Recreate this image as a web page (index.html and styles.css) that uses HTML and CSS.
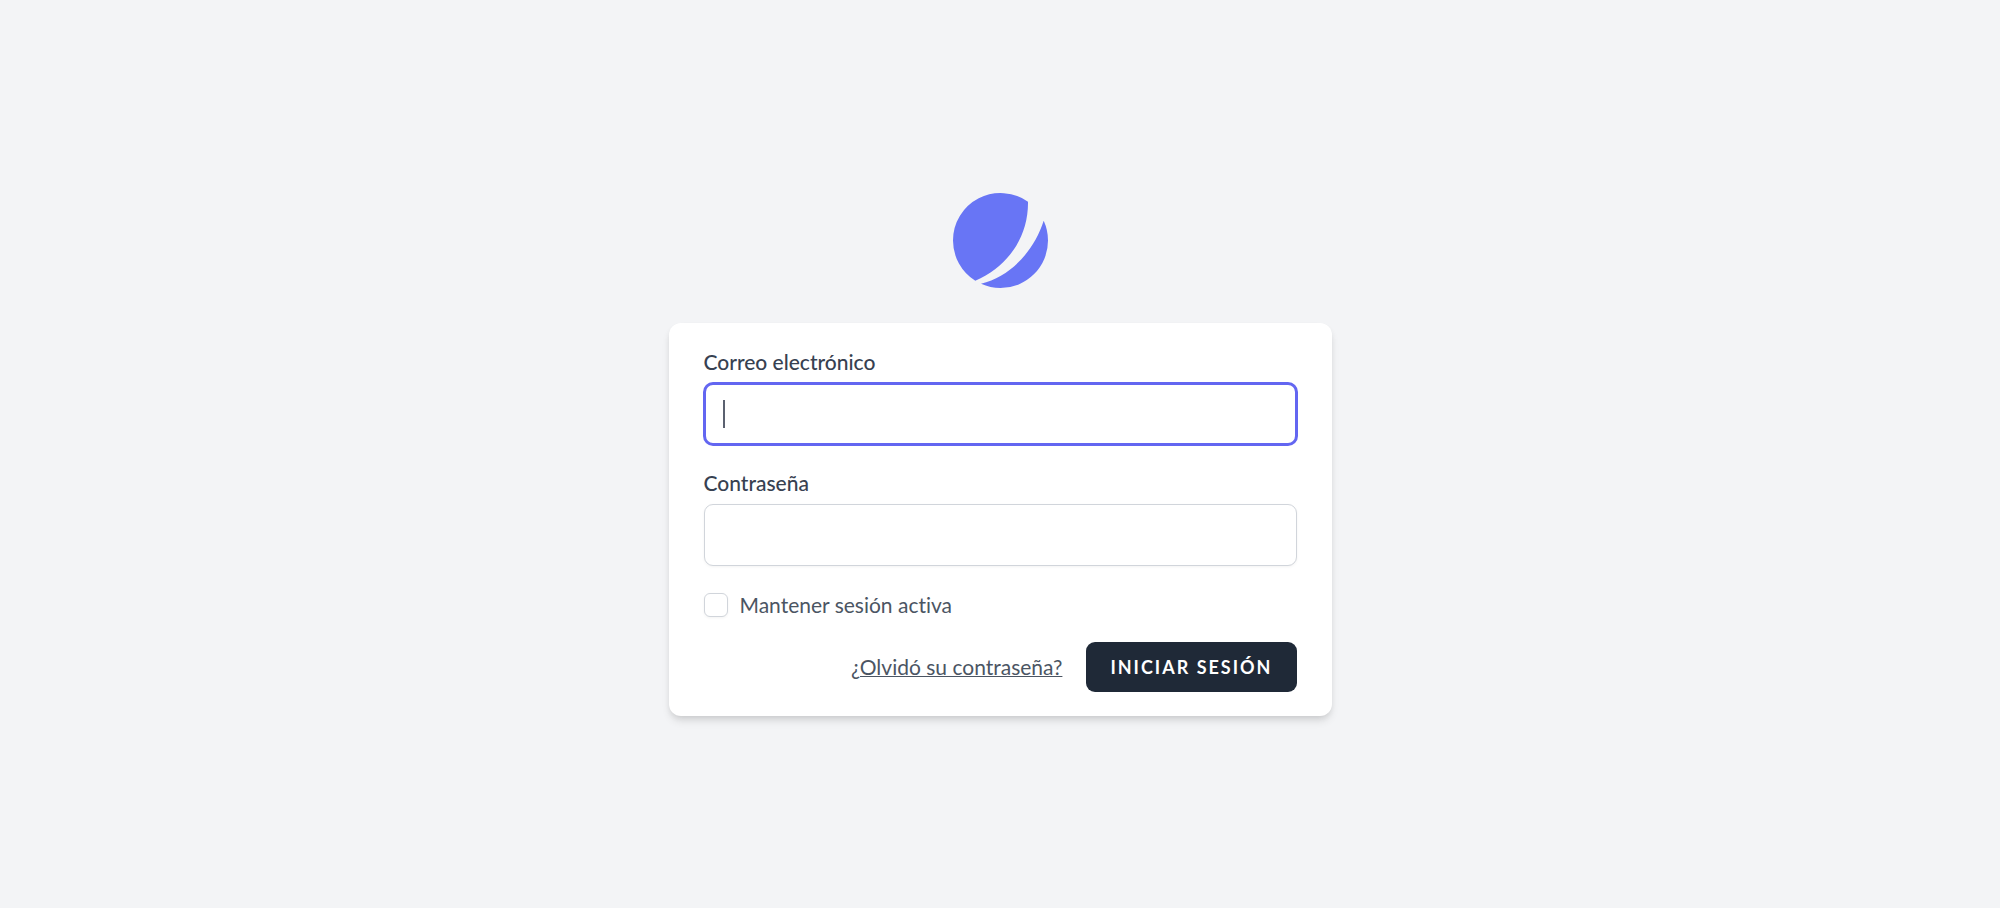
FILE: index.html
```html
<!DOCTYPE html>
<html lang="es">
<head>
<meta charset="utf-8">
<meta name="viewport" content="width=device-width, initial-scale=1">
<title>Iniciar sesión</title>
<link rel="stylesheet" href="styles.css">
</head>
<body>
<main class="page">
  <a class="logo" href="#" aria-label="Inicio">
    <svg viewBox="0 0 95 95" aria-hidden="true">
      <path d="M75 8.8A47.5 47.5 0 0 0 0 47.5A47.5 47.5 0 0 0 22.3 87.8C56 73 75.5 43 75 8.8Z"/>
      <path d="M90.7 27.8C81 58 58 83 28 90.8A47.5 47.5 0 0 0 47.5 95A47.5 47.5 0 0 0 95 47.5A47.5 47.5 0 0 0 90.7 27.8Z"/>
    </svg>
  </a>
  <form class="card">
    <div class="field">
      <label class="label" for="email">Correo electrónico</label>
      <div class="control">
        <input class="input input-active" id="email" type="email" autocomplete="username">
        <span class="caret" aria-hidden="true"></span>
      </div>
    </div>
    <div class="field">
      <label class="label" for="password">Contraseña</label>
      <div class="control">
        <input class="input" id="password" type="password" autocomplete="current-password">
      </div>
    </div>
    <label class="remember" for="remember">
      <input class="checkbox" id="remember" type="checkbox">
      <span>Mantener sesión activa</span>
    </label>
    <div class="actions">
      <a class="forgot" href="#">¿Olvidó su contraseña?</a>
      <button class="submit" type="submit">Iniciar sesión</button>
    </div>
  </form>
</main>
</body>
</html>
```
FILE: styles.css
```css
*, *::before, *::after { box-sizing: border-box; }
body {
  margin: 0;
  background: #f3f4f6;
  color: #111827;
  font-family: Lato, "Open Sans", sans-serif;
  font-size: 21px;
  font-variant-ligatures: none;
  line-height: 30px;
}
.page {
  min-height: 100vh;
  padding-top: 1px;
  display: flex;
  flex-direction: column;
  align-items: center;
  justify-content: center;
  gap: 35px;
}
.logo { display: block; }
.logo svg {
  display: block;
  width: 95px;
  height: 95px;
  fill: #6875f5;
}
.card {
  width: 100%;
  max-width: 663px;
  padding: 24px 35px;
  background: #fff;
  border-radius: 12px;
  box-shadow: 0 6px 9px -1px rgba(0, 0, 0, .1), 0 3px 6px -2px rgba(0, 0, 0, .1);
}
.field { margin-bottom: 23px; }
.label {
  display: block;
  margin-bottom: 6px;
  color: #374151;
  font-weight: 500;
}
.control { position: relative; }
.input {
  display: block;
  width: 100%;
  height: 62px;
  padding: 12px 18px;
  border: 1px solid #d1d5db;
  border-radius: 9px;
  background: #fff;
  font: inherit;
  outline: none;
  box-shadow: 0 1px 3px rgba(0, 0, 0, .05);
}
.input:focus, .input-active {
  border: 2px solid #6366f1;
  box-shadow: 0 0 0 1px #6366f1;
}
.caret {
  position: absolute;
  left: 19px;
  top: 17px;
  width: 2px;
  height: 28px;
  background: #5b6170;
}
.remember {
  display: flex;
  align-items: center;
  gap: 12px;
  margin: 24px 0 22px;
  color: #4b5563;
}
.checkbox {
  appearance: none;
  width: 24px;
  height: 24px;
  margin: 0;
  border: 1px solid #d1d5db;
  border-radius: 6px;
  background: #fff;
  box-shadow: 0 1px 3px rgba(0, 0, 0, .05);
}
.checkbox:checked { background: #4f46e5; }
.actions {
  display: flex;
  align-items: center;
  justify-content: flex-end;
  gap: 24px;
}
.forgot {
  color: #4b5563;
  text-decoration: underline;
  text-decoration-thickness: 1px;
}
.submit {
  height: 50px;
  padding: 0 23px;
  border: 1px solid transparent;
  border-radius: 9px;
  background: #1f2937;
  color: #fff;
  font-family: inherit;
  font-size: 18px;
  font-weight: 700;
  letter-spacing: 2px;
  text-transform: uppercase;
}
```
